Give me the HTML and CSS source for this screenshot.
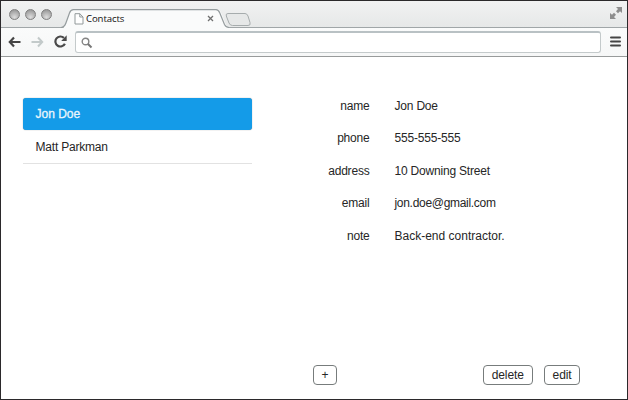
FILE: index.html
```html
<!DOCTYPE html>
<html lang="en">
<head>
<meta charset="utf-8">
<title>Contacts</title>
<link rel="stylesheet" href="styles.css">
</head>
<body>
<div class="window">
  <header class="tabstrip">
    <div class="lights"><i class="light"></i><i class="light"></i><i class="light"></i></div>
    <div class="tab">
      <svg class="tab-shape" width="192" height="20" viewBox="0 0 192 20">
        <path d="M0 19.5C4 19 4.500 16 6 11.500L8.500 4Q9.700 .7 12.500 .7H157Q159 .7 160.300 4L165 16Q166.500 19 169 19.500V20H0Z" fill="#fafbfb"/>
        <path d="M0 18.500C3.500 18.500 4.500 15.500 6 11L8.500 4Q9.700 .7 12.500 .7H155Q157.500 .7 158.800 4L163.500 15.500Q165 18.500 168 18.500" fill="none" stroke="#959c9e" stroke-width="1.200"/>
        <path d="M167 4.500H184Q186 4.500 187 7L189 13.500Q190 16.500 187 16.500H171.500Q169 16.500 168 14L165.300 7Q164.500 4.500 167 4.500Z" fill="#e6e8e8" stroke="#a6acad"/>
      </svg>
      <svg class="page-icon" width="10" height="12" viewBox="0 0 10 12"><path d="M1 .7H5.800L9 4V11H1ZM5.800 .7V4H9" fill="#fff" stroke="#92999a"/></svg>
      <span class="tab-title">Contacts</span>
      <svg class="close" width="7" height="7" viewBox="0 0 7 7"><path d="M1 1L6 6M6 1L1 6" stroke="#707070" stroke-width="1.300"/></svg>
    </div>
    <svg class="expand" width="12" height="12" viewBox="0 0 12 12"><path d="M6 0H12V6L10 4.200L8 6.200L6 4.200L8 2ZM0 6L2 7.800L4 5.800L6 7.800L4 10L6 12H0Z" fill="#8d8d8d"/></svg>
  </header>
  <nav class="toolbar">
    <svg class="nav-icon" width="13" height="12" viewBox="0 0 13 12"><path d="M6 1.500L1.800 6L6 10.500M2 6H12.500" fill="none" stroke="#454545" stroke-width="2.200"/></svg>
    <svg class="nav-icon" width="13" height="12" viewBox="0 0 13 12"><path d="M7 1.500L11.200 6L7 10.500M11 6H.5" fill="none" stroke="#c3caca" stroke-width="2"/></svg>
    <svg class="nav-icon" width="13" height="13" viewBox="0 0 13 13"><path d="M9.900 2.900A5 5 0 1 0 10.900 8.700" fill="none" stroke="#4a4a4a" stroke-width="2.200"/><path d="M12.700 .3V5.900H7.200Z" fill="#4a4a4a"/></svg>
    <div class="address"><svg width="12" height="12" viewBox="0 0 12 12"><circle cx="4.500" cy="4.500" r="3.300" fill="none" stroke="#858585" stroke-width="1.400"/><path d="M7 7L10.500 10.500" stroke="#777" stroke-width="2"/></svg></div>
    <svg class="menu" width="11" height="11" viewBox="0 0 11 11"><path d="M1 1.500H10M1 5.500H10M1 9.500H10" stroke="#444" stroke-width="2" stroke-linecap="round"/></svg>
  </nav>
  <main class="content">
    <ul class="contacts">
      <li class="contact selected">Jon Doe</li>
      <li class="contact">Matt Parkman</li>
    </ul>
    <section class="details">
      <dl class="fields">
        <dt>name</dt><dd>Jon Doe</dd>
        <dt>phone</dt><dd>555-555-555</dd>
        <dt>address</dt><dd>10 Downing Street</dd>
        <dt>email</dt><dd class="email">jon.doe@gmail.com</dd>
        <dt>note</dt><dd class="note">Back-end contractor.</dd>
      </dl>
      <div class="actions">
        <button class="btn add">+</button>
        <button class="btn delete">delete</button>
        <button class="btn edit">edit</button>
      </div>
    </section>
  </main>
</div>
</body>
</html>
```
FILE: styles.css
```css
* { box-sizing: border-box; }
body { margin: 0; background: #fff; font: 12px "Liberation Sans", Arial, sans-serif; letter-spacing: -.2px; color: #262626; }
svg { display: block; flex: none; }
.window { width: 628px; height: 400px; border: 1px solid #2b292b; display: flex; flex-direction: column; overflow: hidden; }
.tabstrip { height: 27px; display: flex; align-items: flex-start; background: linear-gradient(#f1f2f2, #e6e8e8); border-bottom: 1px solid #a0a6a8; flex: none; }
.lights { display: flex; gap: 6px; padding: 8px 0 0 8px; width: 60px; }
.light { width: 11px; height: 11px; margin-right: -1px; border-radius: 50%; border: 1px solid #808080; background: radial-gradient(circle at 50% 80%, #ddd, #999 85%); }
.tab { position: relative; width: 192px; height: 19px; margin-top: 8px; display: flex; align-items: center; padding-left: 13px; }
.tab-shape { position: absolute; left: 0; top: 0; }
.page-icon, .tab-title, .close { position: relative; }
.tab-title { font: 9.6px/14px "Open Sans", sans-serif; letter-spacing: -.1px; color: #111; margin-left: 2px; width: 121px; }
.close { flex: none; }
.expand { margin: 6px 5px 0 auto; }
.toolbar { height: 29px; flex: none; display: flex; align-items: center; padding: 0 6px 1px 7px; background: linear-gradient(#fafbfb, #f6f7f7); border-bottom: 1px solid #989b9b; }
.nav-icon { margin-right: 10px; }
.address { width: 526px; height: 22px; margin: 1px 9px 0 -2px; padding: 4px 5px; border: 1px solid #c4cacb; border-top: 2px solid #b9c1c4; border-radius: 3px; background: #fff; flex: none; }
.menu { margin-left: 0; }
.content { flex: 1; display: flex; }
.contacts { list-style: none; margin: 41px 0 0 22px; padding: 0; width: 229px; }
.contact { height: 33px; line-height: 32px; padding-left: 12.5px; border-bottom: 1px solid #e2e2e2; }
.selected { height: 32px; margin-bottom: 1px; background: #149be8; color: #eaf5fc; border: 0; border-radius: 3px; line-height: 32px; letter-spacing: 0; -webkit-text-stroke: .3px #eaf5fc; box-shadow: 0 0 1px #777; }
.details { width: 328.5px; display: flex; flex-direction: column; justify-content: space-between; }
.fields { margin: 33px 0 0; display: grid; grid-template-columns: 117.5px 1fr; column-gap: 25px; grid-auto-rows: 32.4px; line-height: 32px; }
.fields dt { text-align: right; }
.fields dd { margin: 0; }
.fields .email { letter-spacing: -.3px; }
.fields .note { letter-spacing: 0; }
.actions { display: flex; margin: 0 0 14px 61px; }
.btn { font: inherit; letter-spacing: -.1px; color: #262626; background: #fff; border: 1px solid #777c7c; border-radius: 4px; padding: 0 0 1px; height: 20px; }
.add { width: 24px; margin-right: 146px; }
.delete { width: 50px; margin-right: 11px; }
.edit { width: 37px; }
```
